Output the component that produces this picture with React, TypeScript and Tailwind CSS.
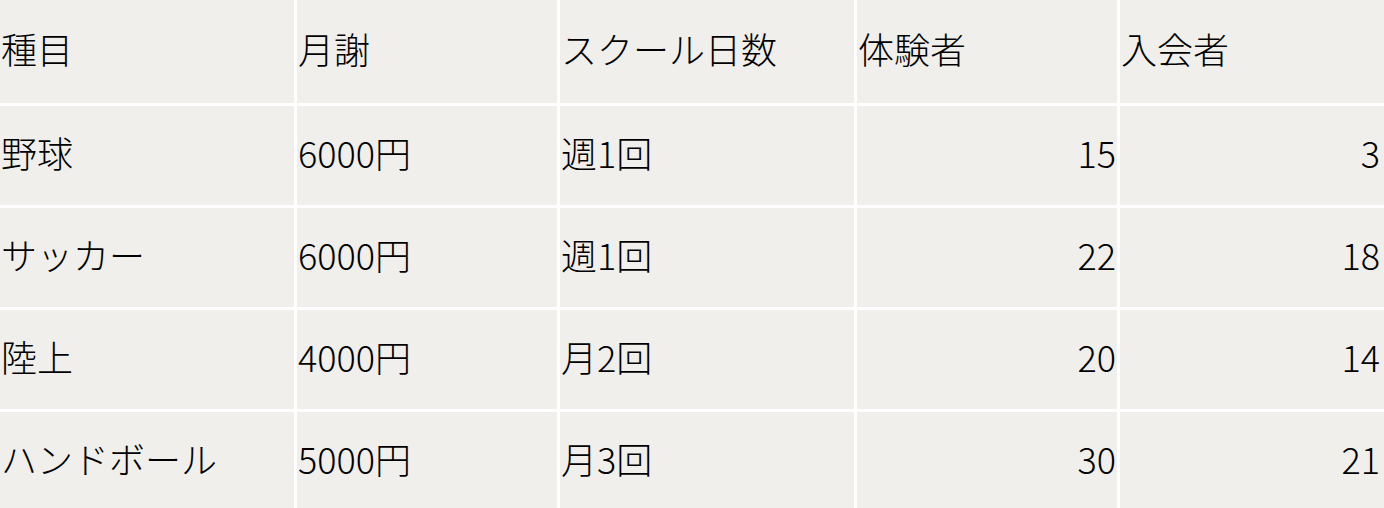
const header = ['種目', '月謝', 'スクール日数', '体験者', '入会者'];

const rows = [
  { sport: '野球', fee: '6000円', days: '週1回', trial: 15, joined: 3 },
  { sport: 'サッカー', fee: '6000円', days: '週1回', trial: 22, joined: 18 },
  { sport: '陸上', fee: '4000円', days: '月2回', trial: 20, joined: 14 },
  { sport: 'ハンドボール', fee: '5000円', days: '月3回', trial: 30, joined: 21 },
];

const cell = 'flex items-center bg-[#f0efeb] pl-[1px] pb-[8px] whitespace-nowrap';

export default function App() {
  return (
    <div className="w-[1384px] h-[508px] overflow-hidden bg-white font-['Noto_Sans_CJK_JP','Noto_Sans',sans-serif] font-light text-[36px] leading-none text-black">
      <div className="grid grid-cols-[294px_260px_294px_260px_1fr] grid-rows-[103px_99px_99px_99px_99px] gap-[3px]">
        {header.map((h) => (
          <div key={h} className={cell}>
            {h}
          </div>
        ))}
        {rows.map((r) => (
          <div key={r.sport} className="contents">
            <div className={cell}>{r.sport}</div>
            <div className={cell}>{r.fee}</div>
            <div className={cell}>{r.days}</div>
            <div className={`${cell} justify-end pr-[1px]`}>{r.trial}</div>
            <div className={`${cell} justify-end pr-[4px]`}>{r.joined}</div>
          </div>
        ))}
      </div>
    </div>
  );
}
